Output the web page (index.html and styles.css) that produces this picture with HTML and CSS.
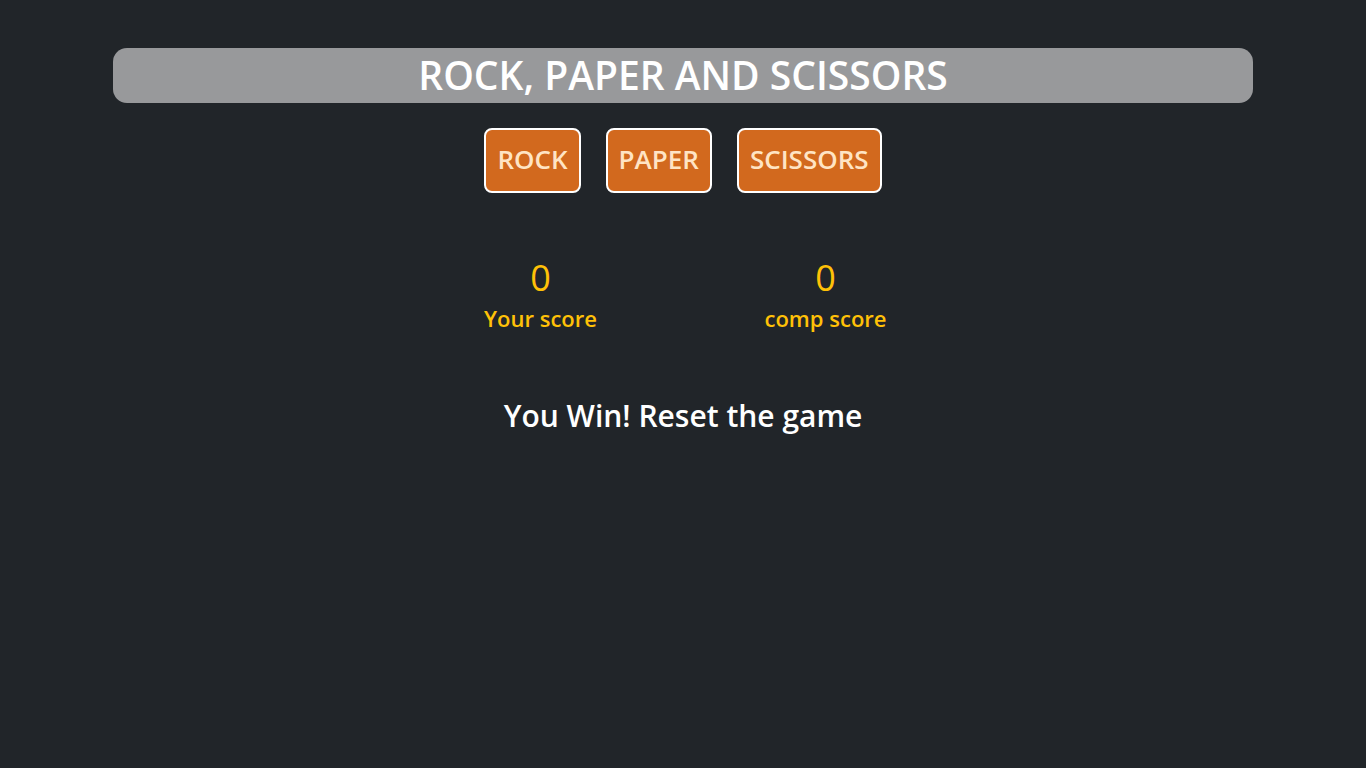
FILE: index.html
```html
<!DOCTYPE html>
<html lang="en">
<head>
<meta charset="utf-8">
<title>Rock, Paper and Scissors</title>
<link rel="stylesheet" href="styles.css">
</head>
<body>
<div class="container">
  <h1 class="title">ROCK, PAPER AND SCISSORS</h1>
  <div class="choices">
    <button class="choice">ROCK</button>
    <button class="choice">PAPER</button>
    <button class="choice">SCISSORS</button>
  </div>
  <div class="scores">
    <div class="score">
      <div class="num">0</div>
      <div class="label">Your score</div>
    </div>
    <div class="score">
      <div class="num">0</div>
      <div class="label">comp score</div>
    </div>
  </div>
  <div class="msg">You Win! Reset the game</div>
</div>
</body>
</html>
```
FILE: styles.css
```css
* { box-sizing: border-box; }
html, body { margin: 0; padding: 0; }
body {
  background: #212529;
  font-family: "Open Sans", "Noto Sans", sans-serif;
  height: 768px;
}
.container {
  width: 1140px;
  margin: 0 auto;
  padding-top: 48px;
}
.title {
  margin: 0;
  height: 55px;
  line-height: 53px;
  background: #98999b;
  border-radius: 14px;
  color: #fff;
  text-align: center;
  font-size: 39px;
  font-weight: 600;
}
.choices {
  display: flex;
  justify-content: center;
  gap: 25px;
  margin-top: 25px;
}
.choice {
  height: 65px;
  padding: 0 11px 3px;
  background: #d2691e;
  border: 2px solid #fff;
  border-radius: 8px;
  color: #ffe4c4;
  font-family: inherit;
  font-size: 26px;
  font-weight: 600;
}
.scores {
  display: flex;
  justify-content: center;
  gap: 85px;
  margin-top: 60px;
}
.score {
  width: 200px;
  text-align: center;
  color: #ffc107;
}
.num {
  font-size: 36px;
  line-height: 50px;
}
.label {
  font-size: 22px;
  font-weight: 600;
  line-height: 30px;
}
.msg {
  margin-top: 62px;
  text-align: center;
  color: #fff;
  font-size: 30px;
  font-weight: 600;
}
```
